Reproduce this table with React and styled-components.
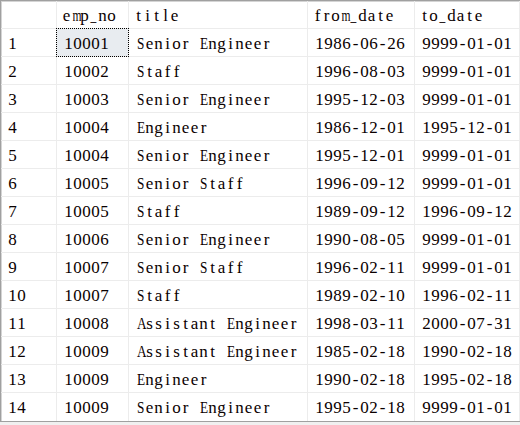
import React from "react"
import styled, { createGlobalStyle } from "styled-components"

const GlobalStyle = createGlobalStyle`
  html, body {
    margin: 0;
    padding: 0;
    background: #f0f0f0;
    overflow: hidden;
  }
`

const Grid = styled.div`
  width: 520px;
  display: grid;
  grid-template-columns: 56px 72px 179px 107px 1fr;
  background: #fff;
  border-top: 1px solid #a0a0a0;
  border-left: 1px solid #a0a0a0;
  border-bottom: 1px solid #a0a0a0;
  box-shadow: inset 0 1px 0 #d4d4d4, inset 1px 0 0 #d4d4d4;
  box-sizing: border-box;
  font-family: "Liberation Serif", "Noto Sans CJK SC", serif;
  font-size: 17px;
  color: #0a0000;
`

const Cell = styled.div`
  position: relative;
  display: flex;
  align-items: center;
  height: 28px;
  padding: 2px 0 0 ${props => (props.header ? 5 : 7)}px;
  border-right: 1px solid #ececec;
  border-bottom: ${props => (props.last ? "none" : "1px solid #ececec")};
  box-sizing: border-box;
  white-space: nowrap;
  overflow: ${props => (props.selected ? "visible" : "hidden")};
  background: ${props => (props.selected ? "#e8ecf0" : "transparent")};
  &::after {
    content: "";
    display: ${props => (props.selected ? "block" : "none")};
    position: absolute;
    top: -1px;
    left: -1px;
    right: -1px;
    bottom: -1px;
    border: 1px dotted #000;
    z-index: 2;
  }
`

const Char = styled.span`
  display: inline-block;
  width: 9px;
  text-align: center;
  transform: scaleX(${props => props.squeeze});
`

const columns = ["emp_no", "title", "from_date", "to_date"]

const rows = [
  ["10001", "Senior Engineer", "1986-06-26", "9999-01-01"],
  ["10002", "Staff", "1996-08-03", "9999-01-01"],
  ["10003", "Senior Engineer", "1995-12-03", "9999-01-01"],
  ["10004", "Engineer", "1986-12-01", "1995-12-01"],
  ["10004", "Senior Engineer", "1995-12-01", "9999-01-01"],
  ["10005", "Senior Staff", "1996-09-12", "9999-01-01"],
  ["10005", "Staff", "1989-09-12", "1996-09-12"],
  ["10006", "Senior Engineer", "1990-08-05", "9999-01-01"],
  ["10007", "Senior Staff", "1996-02-11", "9999-01-01"],
  ["10007", "Staff", "1989-02-10", "1996-02-11"],
  ["10008", "Assistant Engineer", "1998-03-11", "2000-07-31"],
  ["10009", "Assistant Engineer", "1985-02-18", "1990-02-18"],
  ["10009", "Engineer", "1990-02-18", "1995-02-18"],
  ["10009", "Senior Engineer", "1995-02-18", "9999-01-01"],
]

// squeeze wide serif glyphs so they sit in a 9px cell like SimSun
const squeezeFor = ch => {
  if ("mwMW_".includes(ch)) return 0.68
  if (/[A-Z]/.test(ch)) return 0.78
  return 1
}

function Mono({ text }) {
  return (
    <span>
      {String(text)
        .split("")
        .map((ch, i) => (
          <Char key={i} squeeze={squeezeFor(ch)}>
            {ch === " " ? "\u00a0" : ch}
          </Char>
        ))}
    </span>
  )
}

export default function App() {
  return (
    <>
      <GlobalStyle />
      <Grid>
        <Cell header />
        {columns.map(c => (
          <Cell header key={c}>
            <Mono text={c} />
          </Cell>
        ))}
        {rows.map((row, i) => {
          const last = i === rows.length - 1
          return (
            <React.Fragment key={i}>
              <Cell last={last}>
                <Mono text={i + 1} />
              </Cell>
              {row.map((v, j) => (
                <Cell key={j} last={last} selected={i === 0 && j === 0}>
                  <Mono text={v} />
                </Cell>
              ))}
            </React.Fragment>
          )
        })}
      </Grid>
    </>
  )
}
